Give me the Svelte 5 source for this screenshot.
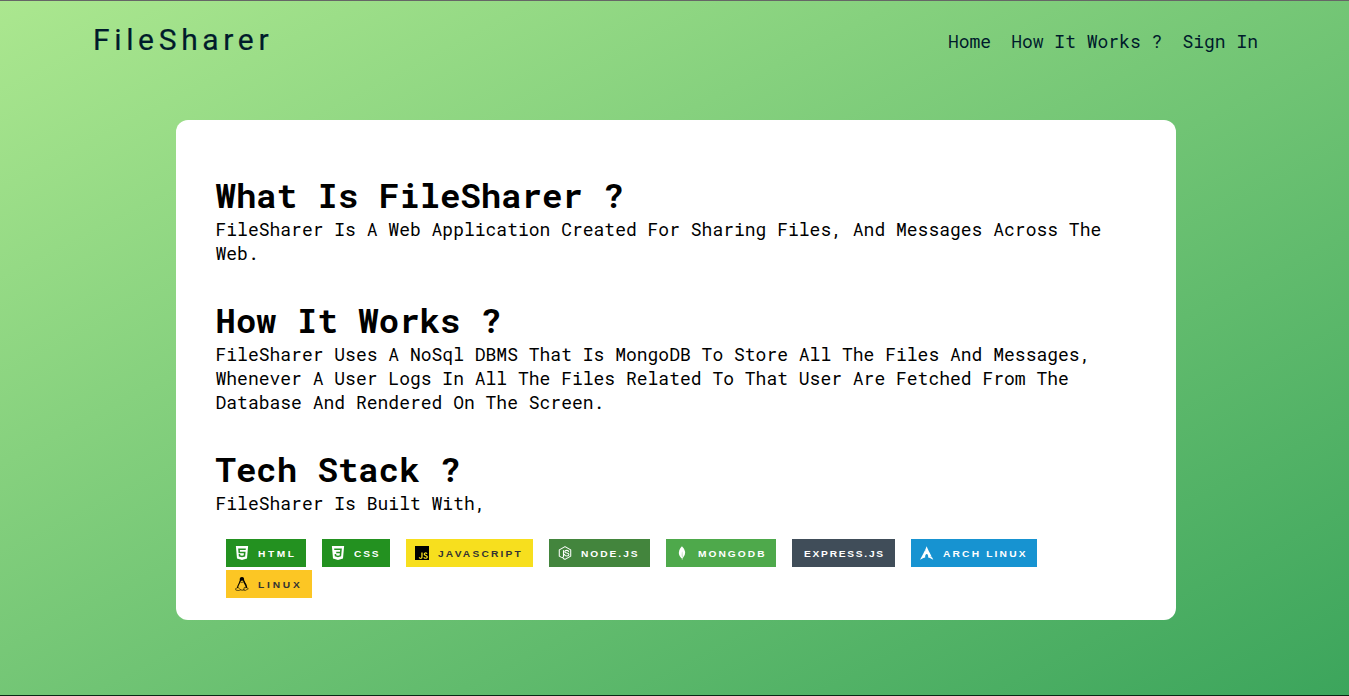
<script>
  const html = 'M1.5 0h21l-1.91 21.563L11.977 24l-8.564-2.438L1.5 0zm7.031 9.75l-.232-2.718 10.059.003.23-2.622L5.412 4.41l.698 8.01h9.126l-.326 3.426-2.91.804-2.955-.81-.188-2.11H6.248l.33 4.171L12 19.351l5.379-1.443.744-8.157H8.531z';
  const css = 'M1.5 0h21l-1.91 21.563L11.977 24l-8.565-2.438L1.5 0zm17.09 4.413L5.41 4.41l.213 2.622 10.125.002-.255 2.716h-6.64l.24 2.573h6.182l-.366 3.523-2.91.804-2.956-.81-.188-2.11h-2.61l.29 3.855L12 19.288l5.373-1.53L18.59 4.414z';
  const js = 'M0 0h24v24H0V0zm22.034 18.276c-.175-1.095-.888-2.015-3.003-2.873-.736-.345-1.554-.585-1.797-1.14-.091-.33-.105-.51-.046-.705.15-.646.915-.84 1.515-.66.39.12.75.42.976.9 1.034-.676 1.034-.676 1.755-1.125-.27-.42-.404-.601-.586-.78-.63-.705-1.469-1.065-2.834-1.034l-.705.089c-.676.165-1.32.525-1.71 1.005-1.14 1.291-.811 3.541.569 4.471 1.365 1.02 3.361 1.244 3.616 2.205.24 1.17-.87 1.545-1.966 1.41-.811-.18-1.26-.586-1.755-1.336l-1.83 1.051c.21.48.45.689.81 1.109 1.74 1.756 6.09 1.666 6.871-1.004.029-.09.24-.705.074-1.65l.046.067zm-8.983-7.245h-2.248c0 1.938-.009 3.864-.009 5.805 0 1.232.063 2.363-.138 2.711-.33.689-1.18.601-1.566.48-.396-.196-.597-.466-.83-.855-.063-.105-.11-.196-.127-.196l-1.825 1.125c.305.63.75 1.172 1.324 1.517.855.51 2.004.675 3.207.405.783-.226 1.458-.691 1.811-1.411.51-.93.402-2.07.397-3.346.012-2.054 0-4.109 0-6.179l.004-.056z';
  const mongo = 'M17.193 9.555c-1.264-5.58-4.252-7.414-4.573-8.115-.28-.394-.53-.954-.735-1.44-.036.495-.055.685-.523 1.184-.723.566-4.438 3.682-4.74 10.02-.282 5.912 4.27 9.435 4.888 9.884l.07.05A73.49 73.49 0 0111.91 24h.481c.114-1.032.284-2.056.51-3.07.417-.296.604-.463.85-.693a11.342 11.342 0 003.639-8.464c.01-.814-.103-1.662-.197-2.218zm-5.336 8.195s0-8.291.275-8.29c.213 0 .49 10.695.49 10.695-.381-.045-.765-1.76-.765-2.405z';
  const arch = 'M11.39.605C10.376 3.092 9.764 4.72 8.635 7.132c.693.734 1.543 1.589 2.923 2.554-1.484-.61-2.496-1.224-3.252-1.86C6.86 10.842 4.596 15.138 0 23.395c3.612-2.085 6.412-3.37 9.021-3.862a6.61 6.61 0 01-.171-1.547l.003-.115c.058-2.315 1.261-4.095 2.687-3.973 1.426.12 2.534 2.096 2.478 4.409a6.52 6.52 0 01-.146 1.243c2.58.505 5.352 1.787 8.914 3.844-.702-1.293-1.33-2.459-1.929-3.57-.943-.73-1.926-1.682-3.933-2.713 1.38.359 2.367.772 3.137 1.234-6.09-11.334-6.582-12.84-8.67-17.74z';

  const badges = [
    { label: 'HTML', cls: 'html', path: html, gap: 2.5 },
    { label: 'CSS', cls: 'css', path: css, gap: 1.7 },
    { label: 'JAVASCRIPT', cls: 'js', path: js, gap: 2.1 },
    { label: 'NODE.JS', cls: 'node', gap: 1.9 },
    { label: 'MONGODB', cls: 'mongo', path: mongo, gap: 1.95 },
    { label: 'EXPRESS.JS', cls: 'express', gap: 1.68 },
    { label: 'ARCH LINUX', cls: 'arch', path: arch, gap: 2.1 },
    { label: 'LINUX', cls: 'linux', gap: 2.7 }
  ];
</script>

<div class="page">
  <header>
    <div class="logo">FileSharer</div>
    <nav>
      <a href="#home">Home</a>
      <a href="#how">How It Works ?</a>
      <a href="#signin">Sign In</a>
    </nav>
  </header>
  <main>
    <section>
      <h1>What Is FileSharer ?</h1>
      <p>FileSharer Is A Web Application Created For Sharing Files, And Messages Across The Web.</p>
    </section>
    <section>
      <h1>How It Works ?</h1>
      <p>FileSharer Uses A NoSql DBMS That Is MongoDB To Store All The Files And Messages, Whenever A User Logs In All The Files Related To That User Are Fetched From The Database And Rendered On The Screen.</p>
    </section>
    <section>
      <h1>Tech Stack ?</h1>
      <p>FileSharer Is Built With,</p>
    </section>
    <div class="badges">
      {#each badges as b}
        <div class="badge {b.cls}">
          {#if b.cls !== 'express'}
            <svg class="icon" viewBox="0 0 24 24">
              {#if b.path}
                <path d={b.path} fill="currentColor" fill-rule="evenodd" />
              {:else if b.cls === 'node'}
                <g fill="none" stroke="currentColor" stroke-width="1.8" stroke-linejoin="round" stroke-linecap="round">
                  <path d="M9 21.3 12 23l9.8-5.600V6.600L12 1 2.200 6.600v10.800l3 1.700c3 1.500 4.200.2 4.200-1.700V7.600" />
                  <path d="M18.400 9.800c-.2-1.600-1.300-2.300-3.400-2.300-2.300 0-3.400.8-3.400 2.200 0 3.500 7.200 1.100 7.200 4.800 0 1.800-1.400 2.600-3.700 2.600-2.800 0-3.800-1-4-2.800" />
                </g>
              {:else}
                <path fill="currentColor" d="M12 0C9 0 7.900 2 8.100 5l.1 3 1.500-.7 2.300-1.300 3.700 1.300-.1-2.300C15.800 1.700 14.800 0 12 0z" />
                <g fill="none" stroke="currentColor" stroke-linejoin="round" stroke-linecap="round">
                  <path stroke-width="1" d="M9.500 8.500l2.300 1 2.700-1.200" />
                  <path stroke-width="1.900" d="M8.500 7.500c-.3 3.500-3.600 6-4 10.500" />
                  <path stroke-width="2.600" d="M15.500 7.500c.6 3.500 4 5.500 4.100 10" />
                  <path stroke-width="1" d="M4.300 18.300 .9 20l.6 2.500 6 1 2-1.200-4-4.300zM16.200 18.300l4-.1 2.700 1.900-5.600 3.200-1.600-.7z" />
                  <path stroke-width="1.300" d="M9.800 22c1.800.8 3.700.8 5.500 0" />
                </g>
              {/if}
            </svg>
          {/if}
          <span class="label" style="letter-spacing: {b.gap}px">{b.label}</span>
        </div>
      {/each}
    </div>
  </main>
</div>

<style>
  :global(body) { margin: 0; }
  * { box-sizing: border-box; }
  .page {
    height: 696px;
    overflow: hidden;
    border-top: 1px solid #666;
    border-bottom: 1px solid #0c2615;
    background: linear-gradient(to bottom right, #abe78f, #3ca55c);
    font-family: "Roboto Mono", "DejaVu Sans Mono", monospace;
  }
  header {
    height: 80px;
    padding: 0 91px 0 93px;
    display: flex;
    justify-content: space-between;
    align-items: center;
    color: #001b2b;
  }
  .logo { font: 400 30px/38px Roboto, sans-serif; letter-spacing: 4.650px; padding-bottom: 2px; -webkit-text-stroke: .2px #001b2b; }
  nav { display: flex; gap: 20px; }
  a { color: inherit; text-decoration: none; font-size: 18px; line-height: 24px; }
  main {
    width: 1000px;
    height: 500px;
    margin: 39px 0 0 176px;
    padding: 52px 40px 0 39.500px;
    background: #fff;
    border-radius: 12px;
    color: #000;
  }
  section { margin-bottom: 32px; }
  h1 { margin: 0 0 -1px; font-size: 34px; line-height: 46px; }
  p { margin: 0; font-size: 18px; line-height: 24px; }
  .badges { display: flex; flex-wrap: wrap; gap: 3px 16px; padding-left: 10.500px; margin-top: -8px; }
  .badge { height: 28px; display: flex; align-items: center; padding-left: 9px; color: #fff; }
  .icon { width: 14px; height: 14px; margin-right: 9px; flex: none; }
  .label { white-space: nowrap; font: bold 9.800px/26px "Liberation Sans", Arial, sans-serif; padding-top: 1px; transform: scaleX(1.040); transform-origin: left; }
  .html { width: 80px; background: #239120; }
  .css { width: 68px; background: #239120; }
  .js { width: 127px; background: #f7df1e; color: #000; }
  .node { width: 101px; background: #43853d; }
  .mongo { width: 110px; background: #4ea94b; }
  .express { width: 103px; background: #404d59; padding-left: 12px; }
  .arch { width: 126px; background: #1793d1; }
  .linux { width: 86px; background: #fcc624; color: #000; }
  .js .label, .linux .label { color: #333; }
</style>
